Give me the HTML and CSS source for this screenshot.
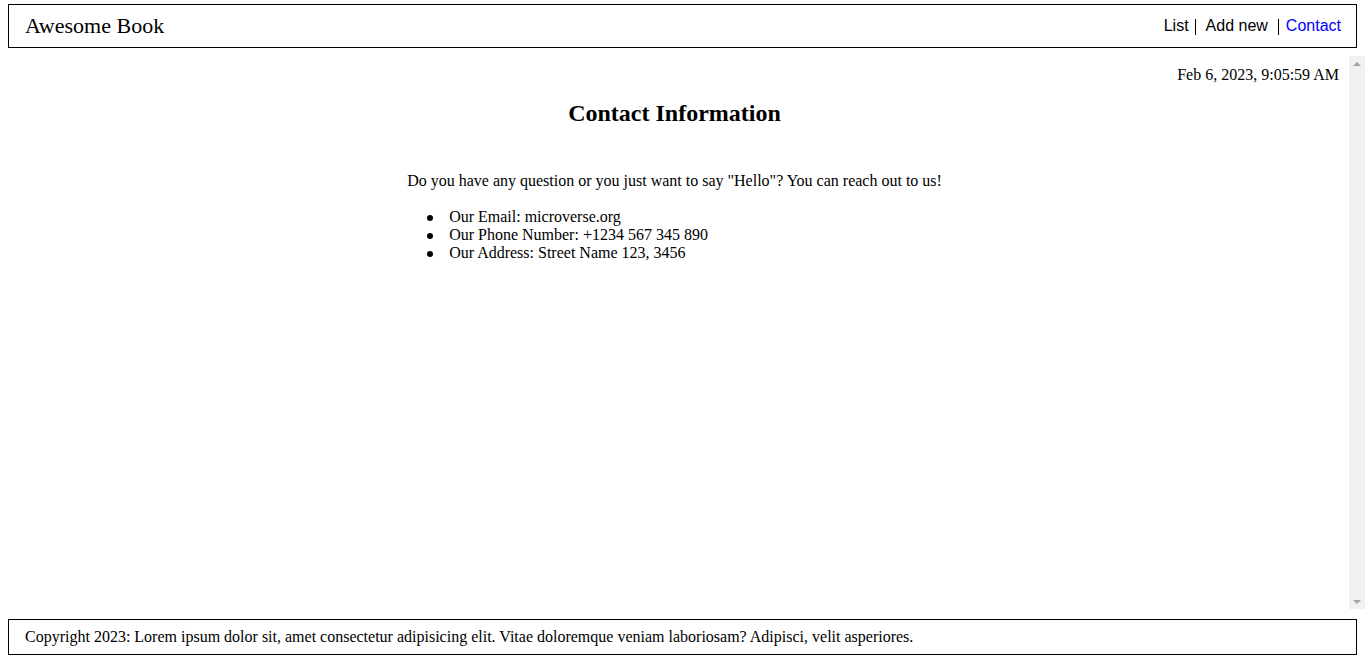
FILE: index.html
```html
<!DOCTYPE html>
<html lang="en">
<head>
<meta charset="utf-8">
<title>Awesome Book</title>
<link rel="stylesheet" href="styles.css">
</head>
<body>
<header class="top-bar">
  <h1 class="brand">Awesome Book</h1>
  <nav class="nav">
    <a class="nav-link" href="#">List</a>
    <span class="sep sep-first"></span>
    <a class="nav-link nav-add" href="#">Add new</a>
    <span class="sep"></span>
    <a class="nav-link nav-active" href="#">Contact</a>
  </nav>
</header>
<div class="main">
  <main class="content">
    <div class="date">Feb 6, 2023, 9:05:59 AM</div>
    <h2 class="title">Contact Information</h2>
    <section class="contact">
      <p class="intro">Do you have any question or you just want to say "Hello"? You can reach out to us!</p>
      <ul class="contact-list">
        <li>Our Email: microverse.org</li>
        <li>Our Phone Number: +1234 567 345 890</li>
        <li>Our Address: Street Name 123, 3456</li>
      </ul>
    </section>
  </main>
  <div class="scrollbar" aria-hidden="true">
    <span class="arrow arrow-up"></span>
    <span class="arrow arrow-down"></span>
  </div>
</div>
<footer class="footer">
  <p class="copy">Copyright 2023: Lorem ipsum dolor sit, amet consectetur adipisicing elit. Vitae doloremque veniam laboriosam? Adipisci, velit asperiores.</p>
</footer>
</body>
</html>
```
FILE: styles.css
```css
* { box-sizing: border-box; }
html, body { margin: 0; padding: 0; height: 100%; }
body {
  font-family: "Liberation Serif", "Times New Roman", serif;
  font-size: 16px;
  color: #000;
  background: #fff;
  display: flex;
  flex-direction: column;
  overflow: hidden;
}
.top-bar {
  margin: 4px 8px 0;
  height: 44px;
  border: 1px solid #000;
  padding: 0 15px 0 16px;
  display: flex;
  align-items: center;
  justify-content: space-between;
  flex-shrink: 0;
}
.brand {
  margin: 0;
  font-size: 22px;
  font-weight: normal;
}
.nav {
  display: flex;
  align-items: center;
  font-family: "Liberation Sans", Arial, sans-serif;
  font-size: 16px;
}
.nav-link { color: #000; text-decoration: none; }
.nav-active { color: #0000ff; }
.sep {
  width: 1px;
  height: 16px;
  background: #000;
  margin: 1px 10px 0 10px;
}
.sep-first { margin: 1px 10px 0 6px; }
.sep + .nav-active { margin-left: -3px; }
.main {
  margin-top: 8px;
  height: 553px;
  flex-shrink: 0;
  display: flex;
}
.content {
  flex: 1;
  min-width: 0;
  overflow: hidden;
  padding-top: 10px;
}
.scrollbar {
  width: 16px;
  flex-shrink: 0;
  background: #f1f1f1;
  display: flex;
  flex-direction: column;
  justify-content: space-between;
  align-items: center;
  padding: 6px 0 5px;
}
.arrow {
  width: 0;
  height: 0;
  border-left: 4px solid transparent;
  border-right: 4px solid transparent;
}
.arrow-up { border-bottom: 4px solid #a3a3a3; }
.arrow-down { border-top: 4px solid #a3a3a3; }
.date {
  text-align: right;
  padding-right: 10px;
}
.title {
  margin: 16px 0 0;
  font-size: 24px;
  text-align: center;
}
.contact {
  width: fit-content;
  margin: 45px auto 0;
}
.intro { margin: 0; }
.contact-list {
  margin: 18px 0 0;
  padding-left: 42px;
  line-height: 18px;
  list-style: none;
}
.contact-list li::before {
  content: "";
  display: inline-block;
  width: 6px;
  height: 6px;
  border-radius: 50%;
  background: #000;
  margin-left: -22px;
  margin-right: 16px;
  vertical-align: 1px;
}
.footer {
  margin: 10px 8px 5px;
  height: 36px;
  border: 1px solid #000;
  padding: 0 16px;
  display: flex;
  align-items: center;
  flex-shrink: 0;
}
.copy { margin: 0; }
```
